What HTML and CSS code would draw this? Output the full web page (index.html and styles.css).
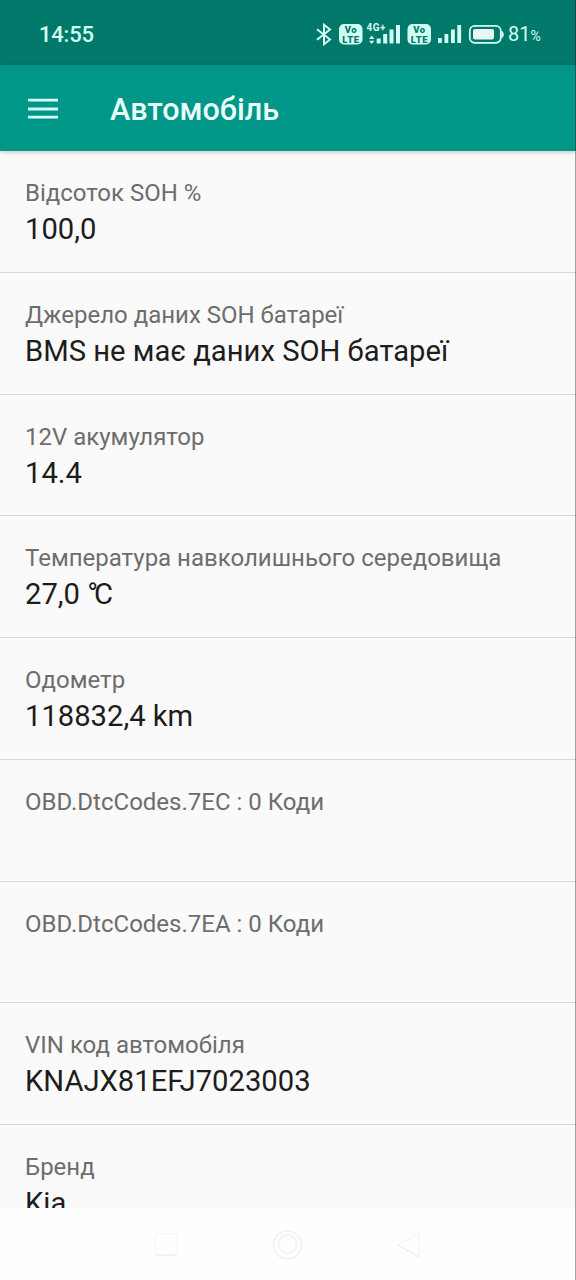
FILE: index.html
```html
<!DOCTYPE html>
<html lang="uk">
<head>
<meta charset="utf-8">
<title>Автомобіль</title>
<link rel="stylesheet" href="styles.css">
</head>
<body>
<div class="screen">
  <header class="status">
    <span class="clock">14:55</span>
    <svg class="status-icons" width="192" height="30" viewBox="312 19 192 30">
      <path class="line" d="M317 28.3 L330 38.5 L324 43.2 V23.8 L330 28.5 L317 38.7"/>
      <rect class="fill" x="339" y="23" width="23.500" height="20.500" rx="5"/>
      <text class="volte" x="350.700" y="32" textLength="12">Vo</text>
      <text class="volte" x="350.700" y="41.500" textLength="17">LTE</text>
      <text class="net" x="366.500" y="30" textLength="19">4G+</text>
      <path class="fill" d="M369 38 L371.700 34.500 L374.400 38Z M369 39.700 L371.700 43 L374.400 39.700Z"/>
      <path class="fill" d="M376.700 37.500h4v5h-4z M383.200 33h4v9.500h-4z M389.500 28.500h4v14h-4z M396 24h4v18.500h-4z"/>
      <rect class="fill" x="407.500" y="23" width="23.500" height="20.500" rx="5"/>
      <text class="volte" x="419.200" y="32" textLength="12">Vo</text>
      <text class="volte" x="419.200" y="41.500" textLength="17">LTE</text>
      <path class="fill" d="M438 37h3.800v5h-3.800z M444.500 33h3.800v9h-3.800z M451 28.500h3.800v13.500h-3.800z M457.300 24h3.800v18h-3.800z"/>
      <rect class="line thin" x="469.800" y="24.800" width="31" height="17" rx="5"/>
      <rect class="level" x="473" y="28" width="21" height="10.600" rx="2"/>
      <path class="fill" d="M501.500 29.500q2.300 1 2.300 4t-2.300 4z"/>
    </svg>
    <span class="percent">81<small>%</small></span>
  </header>
  <div class="appbar">
    <svg class="menu" width="30" height="22" viewBox="0 0 30 22"><path d="M0 2.200h30M0 11h30M0 19.200h30"/></svg>
    <h1>Автомобіль</h1>
  </div>
  <main class="list">
    <section class="row"><p class="label">Відсоток SOH %</p><p class="value">100,0</p></section>
    <section class="row"><p class="label">Джерело даних SOH батареї</p><p class="value">BMS не має даних SOH батареї</p></section>
    <section class="row"><p class="label">12V акумулятор</p><p class="value">14.4</p></section>
    <section class="row"><p class="label">Температура навколишнього середовища</p><p class="value">27,0 <span class="unit">°C</span></p></section>
    <section class="row"><p class="label">Одометр</p><p class="value">118832,4 km</p></section>
    <section class="row"><p class="label">OBD.DtcCodes.7EC : 0 Коди</p></section>
    <section class="row"><p class="label">OBD.DtcCodes.7EA : 0 Коди</p></section>
    <section class="row"><p class="label">VIN код автомобіля</p><p class="value">KNAJX81EFJ7023003</p></section>
    <section class="row"><p class="label">Бренд</p><p class="value">Kia</p></section>
  </main>
  <nav class="navbar">
    <svg width="576" height="72" viewBox="0 1208 576 72">
      <rect class="ghost pale" x="155" y="1234" width="22" height="21" rx="3"/>
      <path class="ghost" d="M155.500 1253q.5 2.500 3 2.500h15q2.500 0 3-2.500"/>
      <circle class="ghost" cx="287.500" cy="1245" r="14"/>
      <circle class="ghost" cx="287.500" cy="1244" r="9"/>
      <path class="ghost pale" d="M398 1245L419 1233V1257"/>
      <path class="ghost" d="M398 1245L419 1257"/>
    </svg>
  </nav>
  <div class="edge"></div>
</div>
</body>
</html>
```
FILE: styles.css
```css
* { box-sizing: border-box; }
body { margin: 0; font-family: Roboto, "Noto Sans", sans-serif; }
h1, p { margin: 0; }
.screen {
  position: relative;
  display: flex;
  flex-direction: column;
  width: 576px;
  height: 1280px;
  overflow: hidden;
  background: #fafafa;
}
.status {
  display: flex;
  align-items: center;
  flex: 0 0 65px;
  padding: 4px 0 0 39px;
  background: #00796b;
  color: #d0fff5;
}
.clock { width: 273px; font-size: 22px; font-weight: 500; line-height: 30px; letter-spacing: -.2px; }
.status-icons { flex: none; }
.fill { fill: #d0fff5; }
.level { fill: #e8f5f2; }
.line { fill: none; stroke: #d0fff5; stroke-width: 2; }
.thin { stroke-width: 1.8; }
.volte { fill: #00796b; font-size: 9.5px; font-weight: 900; text-anchor: middle; }
.net { fill: #d0fff5; font-size: 10px; font-weight: 700; }
.percent { margin-left: 4px; font-size: 20px; line-height: 30px; }
.percent small { font-size: 14px; }
.appbar {
  display: flex;
  align-items: center;
  flex: 0 0 86px;
  padding: 1px 0 0 28px;
  background: #009688;
  box-shadow: 0 1px 5px rgba(0, 0, 0, .22);
  z-index: 1;
}
.menu path { stroke: #d8fff8; stroke-width: 2.8; }
.appbar h1 { margin: 3px 0 0 52px; color: #e8fffb; font-size: 30.6px; font-weight: 500; line-height: 40px; }
.list { flex: 1; min-height: 0; overflow: hidden; }
.row { height: 121.75px; padding: 24px 25px 0; border-bottom: 1px solid #d9d9d9; }
.label { color: #6d6d6d; font-size: 24px; line-height: 36px; white-space: nowrap; }
.value { color: #1d1d1d; font-size: 29.2px; line-height: 36px; white-space: nowrap; }
.unit { letter-spacing: -4px; }
.navbar { flex: 0 0 72px; background: #fefefe; }
.navbar svg { display: block; }
.ghost { fill: none; stroke: #f0f0f0; stroke-width: 1.5; }
.ghost.pale { stroke: #f8f8f8; }
.edge { position: absolute; top: 0; right: 0; bottom: 0; width: 1px; background: rgba(0, 0, 0, .35); z-index: 2; }
```
